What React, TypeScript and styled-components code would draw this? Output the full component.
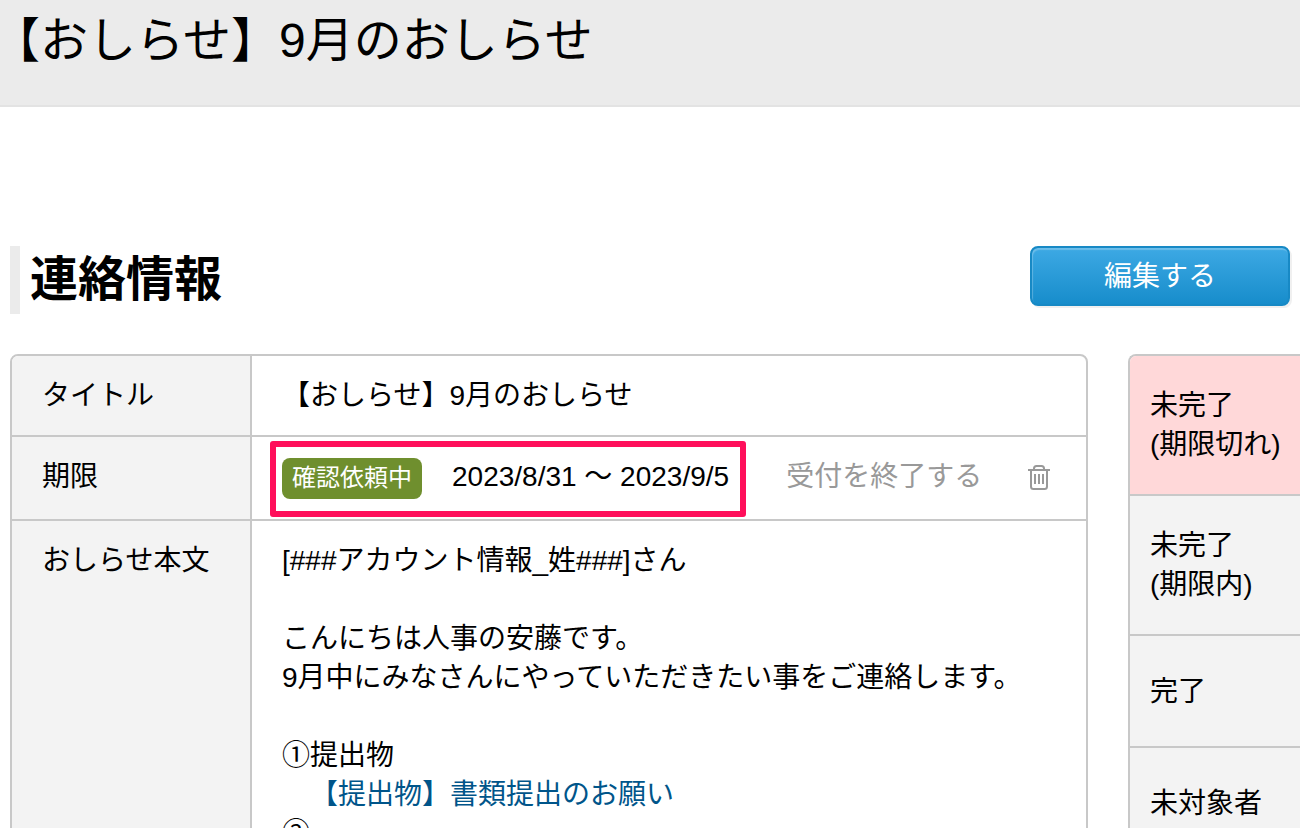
import React from "react";
import styled, { createGlobalStyle } from "styled-components";

const line = "#c8c8c8";
const labelBg = "#f3f3f3";

const GlobalStyle = createGlobalStyle`
  *, *::before, *::after { box-sizing: border-box; }
  body {
    margin: 0;
    background: #fff;
    color: #000;
    font-family: "Liberation Sans", "Noto Sans CJK JP", sans-serif;
    font-size: 28px;
    line-height: 39px;
    text-spacing-trim: space-all;
  }
`;

const Page = styled.div`
  height: 100vh;
  overflow: hidden;
`;

const PageHeader = styled.header`
  padding: 9px 0 32px;
  background: #ebebeb;
  border-bottom: 2px solid #e3e3e3;
`;

/* The opening bracket carries blank space on its left, so it hangs outside. */
const PageTitle = styled.h1`
  margin: 0;
  text-indent: -8px;
  font-size: 48px;
  font-weight: 400;
  line-height: 64px;
`;

const Main = styled.main`
  padding: 139px 0 0 10px;
`;

const SectionHeader = styled.div`
  display: flex;
  justify-content: space-between;
  align-items: flex-start;
  padding-right: 10px;
  margin-bottom: 40px;
`;

const SectionTitle = styled.h2`
  margin: 0;
  padding-left: 10px;
  border-left: 10px solid #ebebeb;
  font-size: 48px;
  font-weight: 700;
  line-height: 68px;
`;

const PrimaryButton = styled.button`
  width: 260px;
  height: 60px;
  padding: 0;
  border: 2px solid #1789c5;
  border-radius: 8px;
  background: linear-gradient(#3da9e4, #178dcb);
  box-shadow: inset 1px 2px 1px rgba(255, 255, 255, 0.25), 2px 2px 0 #f0f0f0;
  color: #fff;
  font: inherit;
  cursor: pointer;
`;

const Columns = styled.div`
  display: grid;
  grid-template-columns: minmax(0, 1fr) 172px;
  gap: 40px;
  align-items: start;
`;

const InfoTable = styled.table`
  width: 100%;
  border: 2px solid ${line};
  border-radius: 8px;
  border-spacing: 0;
  table-layout: fixed;
  overflow: hidden;
`;

const LabelColumn = styled.col`
  width: 240px;
`;

const Label = styled.th`
  padding: 20px 30px;
  border-right: 2px solid ${line};
  background: ${labelBg};
  font-weight: 400;
  text-align: left;
  vertical-align: top;
`;

const Value = styled.td`
  padding: 20px 30px;
  vertical-align: top;
`;

const InfoRow = styled.tr`
  & + & > * {
    border-top: 2px solid ${line};
  }
`;

const PeriodLine = styled.div`
  display: flex;
  align-items: flex-start;
`;

const Period = styled.div`
  position: relative;
  display: flex;
  align-items: flex-start;
  gap: 30px;
  height: 42px;
  white-space: nowrap;

  &::after {
    content: "";
    position: absolute;
    inset: -16px -17px -18px -12px;
    border: 6px solid #ff0f5b;
    border-radius: 3px;
    pointer-events: none;
  }
`;

const Badge = styled.span`
  align-self: flex-end;
  padding: 0 10px 2px;
  border-radius: 8px;
  background: #6f8f2e;
  color: #fff;
  font-size: 24px;
`;

const TextButton = styled.button`
  margin-left: 57px;
  padding: 0;
  border: 0;
  background: none;
  color: #999;
  font: inherit;
  white-space: nowrap;
  cursor: pointer;
`;

const IconButton = styled.button`
  display: flex;
  align-items: center;
  height: 39px;
  margin-left: 45px;
  padding: 0;
  border: 0;
  background: none;
  color: #999;
  cursor: pointer;
`;

const Message = styled.div`
  white-space: pre-wrap;
`;

const MessageLink = styled.a`
  color: #00558a;
  text-decoration: none;
`;

const StatusList = styled.ul`
  margin: 0;
  padding: 0;
  border: 2px solid ${line};
  border-right: 0;
  border-radius: 8px 0 0 0;
  list-style: none;
  overflow: hidden;
`;

const StatusItem = styled.li<{ $overdue?: boolean; $tall?: boolean }>`
  display: flex;
  align-items: center;
  height: ${(p) => (p.$tall ? 140 : 112)}px;
  padding-left: 20px;
  border-bottom: 2px solid ${line};
  background: ${(p) => (p.$overdue ? "#ffd8d9" : labelBg)};
  white-space: nowrap;
`;

function TrashIcon() {
  return (
    <svg width="24" height="26" viewBox="0 0 24 26" fill="none" stroke="currentColor" strokeWidth="2" aria-hidden="true">
      <path d="M1 6h22" />
      <path d="M7 6V4.500Q7 2 9.500 2h5Q17 2 17 4.500V6" />
      <path d="M4 6v16.500Q4 25 6.500 25h11Q20 25 20 22.500V6" />
      <path d="M8 10v10M12 10v10M16 10v10" />
    </svg>
  );
}

export default function App() {
  return (
    <Page lang="ja">
      <GlobalStyle />
      <PageHeader>
        <PageTitle>【おしらせ】9月のおしらせ</PageTitle>
      </PageHeader>
      <Main>
        <SectionHeader>
          <SectionTitle>連絡情報</SectionTitle>
          <PrimaryButton type="button">編集する</PrimaryButton>
        </SectionHeader>
        <Columns>
          <InfoTable>
            <colgroup>
              <LabelColumn />
              <col />
            </colgroup>
            <tbody>
              <InfoRow>
                <Label scope="row">タイトル</Label>
                <Value>【おしらせ】9月のおしらせ</Value>
              </InfoRow>
              <InfoRow>
                <Label scope="row">期限</Label>
                <Value>
                  <PeriodLine>
                    <Period>
                      <Badge>確認依頼中</Badge>
                      <span>2023/8/31 〜 2023/9/5</span>
                    </Period>
                    <TextButton type="button">受付を終了する</TextButton>
                    <IconButton type="button" aria-label="削除">
                      <TrashIcon />
                    </IconButton>
                  </PeriodLine>
                </Value>
              </InfoRow>
              <InfoRow>
                <Label scope="row">おしらせ本文</Label>
                <Value>
                  <Message>
                    {"[###アカウント情報_姓###]さん\n\nこんにちは人事の安藤です。\n9月中にみなさんにやっていただきたい事をご連絡します。\n\n①提出物\n　"}
                    <MessageLink href="#documents">【提出物】書類提出のお願い</MessageLink>
                    {"\n②"}
                  </Message>
                </Value>
              </InfoRow>
            </tbody>
          </InfoTable>
          <StatusList>
            <StatusItem $tall $overdue>
              未完了
              <br />
              (期限切れ)
            </StatusItem>
            <StatusItem $tall>
              未完了
              <br />
              (期限内)
            </StatusItem>
            <StatusItem>完了</StatusItem>
            <StatusItem>未対象者</StatusItem>
          </StatusList>
        </Columns>
      </Main>
    </Page>
  );
}
